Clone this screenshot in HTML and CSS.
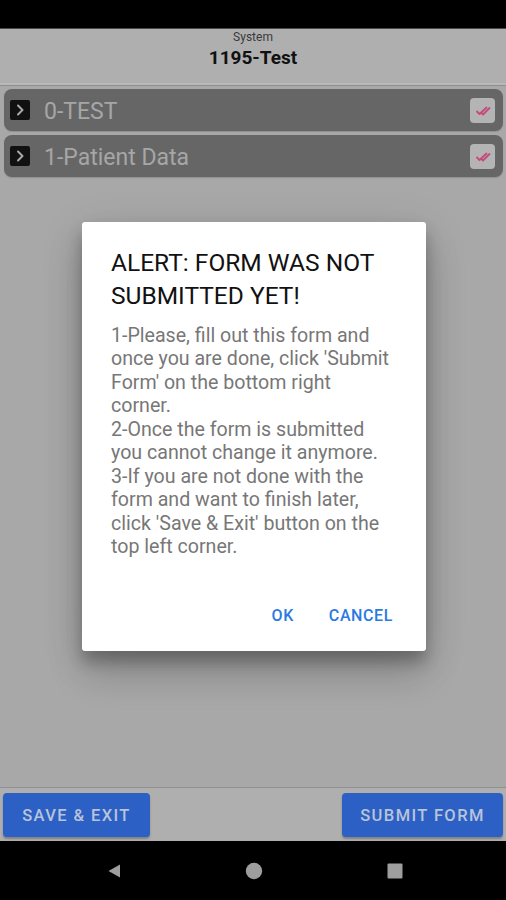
FILE: index.html
```html
<!DOCTYPE html>
<html>
<head>
<meta charset="utf-8">
<link rel="stylesheet" href="styles.css">
</head>
<body>
<div class="screen">
  <div class="statusbar"></div>
  <header class="header">
    <div class="sub">System</div>
    <div class="title">1195-Test</div>
  </header>
  <main class="content">
    <div class="row">
      <span class="expand"><svg viewBox="0 0 20 20" width="20" height="20"><path d="M8 5.5l4.5 4.5-4.5 4.5" fill="none" stroke="#a9a9a9" stroke-width="2" stroke-linecap="round" stroke-linejoin="round"/></svg></span>
      <span class="label">0-TEST</span>
      <span class="check"><svg viewBox="0 0 24 24" width="24" height="24"><path d="M6 13.5l2.5 2.5 7-6.5M11 15.5l1 1 6.5-6.5" fill="none" stroke="#c44a7a" stroke-width="1.8" stroke-linecap="round" stroke-linejoin="round"/></svg></span>
    </div>
    <div class="row">
      <span class="expand"><svg viewBox="0 0 20 20" width="20" height="20"><path d="M8 5.5l4.5 4.5-4.5 4.5" fill="none" stroke="#a9a9a9" stroke-width="2" stroke-linecap="round" stroke-linejoin="round"/></svg></span>
      <span class="label">1-Patient Data</span>
      <span class="check"><svg viewBox="0 0 24 24" width="24" height="24"><path d="M6 13.5l2.5 2.5 7-6.5M11 15.5l1 1 6.5-6.5" fill="none" stroke="#c44a7a" stroke-width="1.8" stroke-linecap="round" stroke-linejoin="round"/></svg></span>
    </div>
  </main>
  <footer class="footer">
    <button class="btn">SAVE &amp; EXIT</button>
    <button class="btn">SUBMIT FORM</button>
  </footer>
  <nav class="navbar">
    <svg class="nav-back" viewBox="0 0 16 16" width="16" height="16"><path d="M14 1.5v13L2.5 8z" fill="#9e9e9e"/></svg>
    <svg class="nav-home" viewBox="0 0 18 18" width="18" height="18"><circle cx="9" cy="9" r="8.2" fill="#9e9e9e"/></svg>
    <svg class="nav-recent" viewBox="0 0 16 16" width="16" height="16"><rect x="0.5" y="0.5" width="15" height="15" rx="1" fill="#9e9e9e"/></svg>
  </nav>

  <div class="dialog">
    <h2 class="dlg-title">ALERT: FORM WAS NOT SUBMITTED YET!</h2>
    <p class="dlg-body">1-Please, fill out this form and once you are done, click 'Submit Form' on the bottom right corner.<br>2-Once the form is submitted you cannot change it anymore.<br>3-If you are not done with the form and want to finish later, click 'Save &amp; Exit' button on the top left corner.</p>
    <div class="dlg-actions">
      <span class="dlg-btn">OK</span>
      <span class="dlg-btn">CANCEL</span>
    </div>
  </div>
</div>
</body>
</html>
```

FILE: styles.css
```css
* { box-sizing: border-box; }
html, body { margin: 0; padding: 0; }
body {
  font-family: Roboto, "Noto Sans", "Liberation Sans", sans-serif;
  background: #000;
}
.screen {
  position: relative;
  width: 506px;
  height: 900px;
  display: flex;
  flex-direction: column;
  overflow: hidden;
}
.statusbar {
  height: 29px;
  background: #000;
  border-bottom: 1px solid #4a4a4a;
  flex: none;
}
.header {
  height: 57px;
  flex: none;
  background: #afafaf;
  border-bottom: 1px solid #8f8f8f;
  box-shadow: inset 0 -2px 0 #b9b9b9;
  display: flex;
  flex-direction: column;
  align-items: center;
  padding-top: 1px;
}
.header .sub {
  font-size: 12px;
  line-height: 14px;
  color: #3a3a3a;
}
.header .title {
  font-size: 19px;
  font-weight: 700;
  line-height: 27px;
  color: #111;
}
.content {
  flex: 1;
  background: #a8a8a8;
  padding: 3px 3px 0 4px;
  display: flex;
  flex-direction: column;
  gap: 4px;
}
.row {
  height: 42px;
  background: #666;
  border-radius: 8px;
  box-shadow: 0 1px 1px rgba(0,0,0,0.15);
  display: flex;
  align-items: center;
  padding: 0 8px 0 6px;
}
.expand {
  width: 20px;
  height: 20px;
  background: #111;
  border-radius: 2px;
  display: flex;
}
.label {
  flex: 1;
  margin-left: 14px;
  padding-top: 3px;
  font-size: 23px;
  color: #a6a6a6;
  line-height: 28px;
}
.check {
  width: 25px;
  height: 25px;
  background: #b4b4b4;
  border-radius: 4px;
  display: flex;
  align-items: center;
  justify-content: center;
}
.footer {
  flex: none;
  height: 54px;
  background: #afafaf;
  border-top: 1px solid #8f8f8f;
  display: flex;
  justify-content: space-between;
  align-items: flex-start;
  padding: 5px 3px 0 3px;
}
.btn {
  height: 44px;
  border: none;
  border-radius: 4px;
  background: #2d60c4;
  color: #b8c4da;
  font-family: Roboto, "Noto Sans", "Liberation Sans", sans-serif;
  font-size: 16.5px;
  font-weight: 500;
  letter-spacing: 1.4px;
  padding: 0;
  box-shadow: 0 2px 2px rgba(0,0,0,0.25);
}
.btn:first-child { width: 147px; }
.btn:last-child { width: 161px; }
.navbar {
  flex: none;
  height: 59px;
  background: #000;
  display: flex;
  align-items: center;
}
.nav-back { margin-left: 106px; }
.nav-home { margin-left: 123px; }
.nav-recent { margin-left: 124px; }

.dialog {
  position: absolute;
  left: 82px;
  top: 222px;
  width: 344px;
  height: 429px;
  background: #fff;
  border-radius: 3px;
  box-shadow: 0 11px 15px rgba(0,0,0,0.25), 0 24px 38px rgba(0,0,0,0.14), 0 9px 46px rgba(0,0,0,0.12);
  padding: 24px 8px 0 29px;
  display: flex;
  flex-direction: column;
}
.dlg-title {
  margin: 0;
  font-size: 24.5px;
  font-weight: 400;
  line-height: 33px;
  color: #111;
  width: 300px;
}
.dlg-body {
  margin: 12px 0 0 0;
  font-size: 19.6px;
  line-height: 23.45px;
  color: #777;
  width: 280px;
}
.dlg-actions {
  margin-top: auto;
  height: 45px;
  display: flex;
  justify-content: flex-end;
  align-items: flex-start;
  gap: 35px;
  padding-right: 25px;
}
.dlg-btn {
  font-size: 16px;
  font-weight: 500;
  letter-spacing: 0.6px;
  color: #2a7ae2;
  line-height: 20px;
}
```
